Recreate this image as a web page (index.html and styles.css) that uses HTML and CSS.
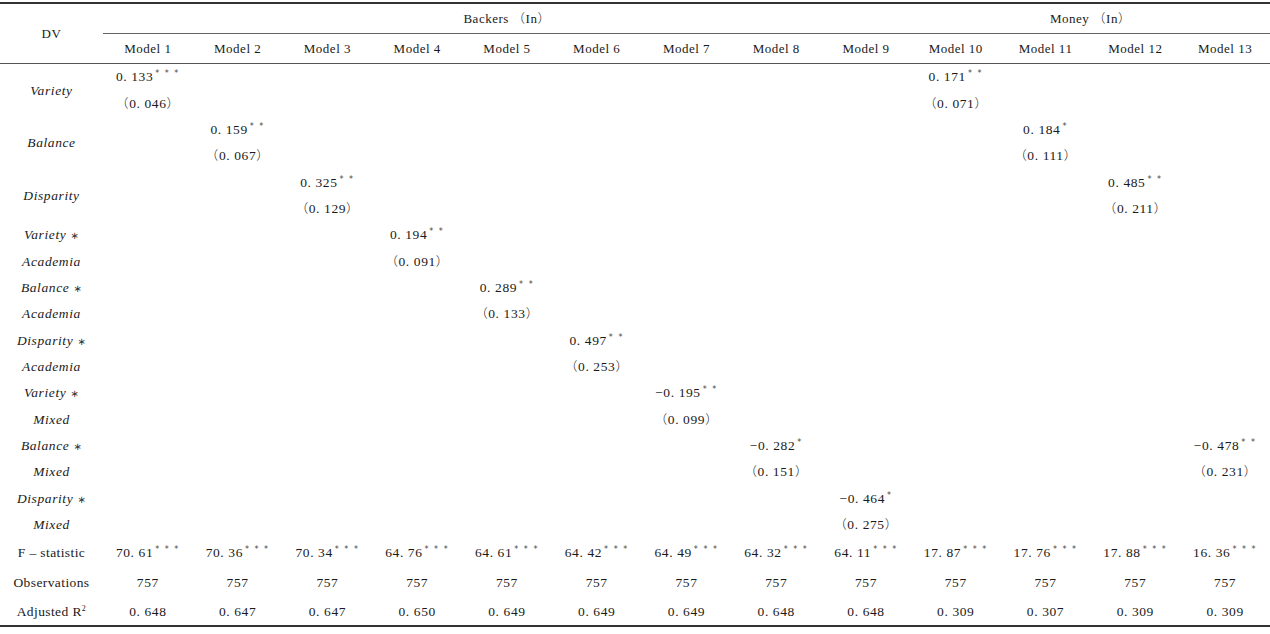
FILE: index.html
```html
<!DOCTYPE html>
<html>
<head>
<meta charset="utf-8">
<link rel="stylesheet" href="styles.css">
</head>
<body>
<table class="t">
<colgroup><col class="c0"><col span="13"></colgroup>
<tr class="h1"><td rowspan="2" class="dv">DV</td><td colspan="9" class="grp">Backers <span class="p">（</span>In<span class="p">）</span></td><td colspan="4" class="grp">Money <span class="p">（</span>In<span class="p">）</span></td></tr>
<tr class="h2"><td>Model 1</td><td>Model 2</td><td>Model 3</td><td>Model 4</td><td>Model 5</td><td>Model 6</td><td>Model 7</td><td>Model 8</td><td>Model 9</td><td>Model 10</td><td>Model 11</td><td>Model 12</td><td>Model 13</td></tr>

<tr class="d"><td rowspan="2" class="lab"><i>Variety</i></td><td class="n">0. 133<sup>* * *</sup></td><td></td><td></td><td></td><td></td><td></td><td></td><td></td><td></td><td class="n">0. 171<sup>* *</sup></td><td></td><td></td><td></td></tr>
<tr class="d"><td class="n"><span class="p">（</span>0. 046<span class="p">）</span></td><td></td><td></td><td></td><td></td><td></td><td></td><td></td><td></td><td class="n"><span class="p">（</span>0. 071<span class="p">）</span></td><td></td><td></td><td></td></tr>

<tr class="d"><td rowspan="2" class="lab"><i>Balance</i></td><td></td><td class="n">0. 159<sup>* *</sup></td><td></td><td></td><td></td><td></td><td></td><td></td><td></td><td></td><td class="n">0. 184<sup>*</sup></td><td></td><td></td></tr>
<tr class="d"><td></td><td class="n"><span class="p">（</span>0. 067<span class="p">）</span></td><td></td><td></td><td></td><td></td><td></td><td></td><td></td><td></td><td class="n"><span class="p">（</span>0. 111<span class="p">）</span></td><td></td><td></td></tr>

<tr class="d"><td rowspan="2" class="lab"><i>Disparity</i></td><td></td><td></td><td class="n">0. 325<sup>* *</sup></td><td></td><td></td><td></td><td></td><td></td><td></td><td></td><td></td><td class="n">0. 485<sup>* *</sup></td><td></td></tr>
<tr class="d"><td></td><td></td><td class="n"><span class="p">（</span>0. 129<span class="p">）</span></td><td></td><td></td><td></td><td></td><td></td><td></td><td></td><td></td><td class="n"><span class="p">（</span>0. 211<span class="p">）</span></td><td></td></tr>

<tr class="d"><td class="lab"><i>Variety</i> <span class="ast">∗</span></td><td></td><td></td><td></td><td class="n">0. 194<sup>* *</sup></td><td></td><td></td><td></td><td></td><td></td><td></td><td></td><td></td><td></td></tr>
<tr class="d"><td class="lab"><i>Academia</i></td><td></td><td></td><td></td><td class="n"><span class="p">（</span>0. 091<span class="p">）</span></td><td></td><td></td><td></td><td></td><td></td><td></td><td></td><td></td><td></td></tr>

<tr class="d"><td class="lab"><i>Balance</i> <span class="ast">∗</span></td><td></td><td></td><td></td><td></td><td class="n">0. 289<sup>* *</sup></td><td></td><td></td><td></td><td></td><td></td><td></td><td></td><td></td></tr>
<tr class="d"><td class="lab"><i>Academia</i></td><td></td><td></td><td></td><td></td><td class="n"><span class="p">（</span>0. 133<span class="p">）</span></td><td></td><td></td><td></td><td></td><td></td><td></td><td></td><td></td></tr>

<tr class="d"><td class="lab"><i>Disparity</i> <span class="ast">∗</span></td><td></td><td></td><td></td><td></td><td></td><td class="n">0. 497<sup>* *</sup></td><td></td><td></td><td></td><td></td><td></td><td></td><td></td></tr>
<tr class="d"><td class="lab"><i>Academia</i></td><td></td><td></td><td></td><td></td><td></td><td class="n"><span class="p">（</span>0. 253<span class="p">）</span></td><td></td><td></td><td></td><td></td><td></td><td></td><td></td></tr>

<tr class="d"><td class="lab"><i>Variety</i> <span class="ast">∗</span></td><td></td><td></td><td></td><td></td><td></td><td></td><td class="n">−0. 195<sup>* *</sup></td><td></td><td></td><td></td><td></td><td></td><td></td></tr>
<tr class="d"><td class="lab"><i>Mixed</i></td><td></td><td></td><td></td><td></td><td></td><td></td><td class="n"><span class="p">（</span>0. 099<span class="p">）</span></td><td></td><td></td><td></td><td></td><td></td><td></td></tr>

<tr class="d"><td class="lab"><i>Balance</i> <span class="ast">∗</span></td><td></td><td></td><td></td><td></td><td></td><td></td><td></td><td class="n">−0. 282<sup>*</sup></td><td></td><td></td><td></td><td></td><td class="n">−0. 478<sup>* *</sup></td></tr>
<tr class="d"><td class="lab"><i>Mixed</i></td><td></td><td></td><td></td><td></td><td></td><td></td><td></td><td class="n"><span class="p">（</span>0. 151<span class="p">）</span></td><td></td><td></td><td></td><td></td><td class="n"><span class="p">（</span>0. 231<span class="p">）</span></td></tr>

<tr class="d"><td class="lab"><i>Disparity</i> <span class="ast">∗</span></td><td></td><td></td><td></td><td></td><td></td><td></td><td></td><td></td><td class="n">−0. 464<sup>*</sup></td><td></td><td></td><td></td><td></td></tr>
<tr class="d"><td class="lab"><i>Mixed</i></td><td></td><td></td><td></td><td></td><td></td><td></td><td></td><td></td><td class="n"><span class="p">（</span>0. 275<span class="p">）</span></td><td></td><td></td><td></td><td></td></tr>

<tr class="s1"><td class="lab2">F – statistic</td><td class="n">70. 61<sup>* * *</sup></td><td class="n">70. 36<sup>* * *</sup></td><td class="n">70. 34<sup>* * *</sup></td><td class="n">64. 76<sup>* * *</sup></td><td class="n">64. 61<sup>* * *</sup></td><td class="n">64. 42<sup>* * *</sup></td><td class="n">64. 49<sup>* * *</sup></td><td class="n">64. 32<sup>* * *</sup></td><td class="n">64. 11<sup>* * *</sup></td><td class="n">17. 87<sup>* * *</sup></td><td class="n">17. 76<sup>* * *</sup></td><td class="n">17. 88<sup>* * *</sup></td><td class="n">16. 36<sup>* * *</sup></td></tr>
<tr class="s2"><td class="lab2">Observations</td><td class="n">757</td><td class="n">757</td><td class="n">757</td><td class="n">757</td><td class="n">757</td><td class="n">757</td><td class="n">757</td><td class="n">757</td><td class="n">757</td><td class="n">757</td><td class="n">757</td><td class="n">757</td><td class="n">757</td></tr>
<tr class="s3"><td class="lab2">Adjusted R<sup class="sq">2</sup></td><td class="n">0. 648</td><td class="n">0. 647</td><td class="n">0. 647</td><td class="n">0. 650</td><td class="n">0. 649</td><td class="n">0. 649</td><td class="n">0. 649</td><td class="n">0. 648</td><td class="n">0. 648</td><td class="n">0. 309</td><td class="n">0. 307</td><td class="n">0. 309</td><td class="n">0. 309</td></tr>
</table>
</body>
</html>
```
FILE: styles.css
```css
html, body {
  margin: 0;
  padding: 0;
  background: #fff;
}
body {
  color: #1a1a1a;
  font-family: "Liberation Serif", "Times New Roman", "DejaVu Serif", serif;
}
.t {
  width: 1270px;
  table-layout: fixed;
  border-collapse: collapse;
  margin-top: 2px;
  border-top: 2px solid #333;
  border-bottom: 2px solid #333;
  font-family: "Liberation Serif", "Times New Roman", "DejaVu Serif", serif;
  font-size: 13px;
  letter-spacing: 0.5px;
}
.c0 {
  width: 103px;
}
.t td {
  padding: 0;
  text-align: center;
  vertical-align: middle;
  white-space: nowrap;
  line-height: 1;
}
.p {
  font-family: "Noto Sans CJK SC", sans-serif;
  font-weight: 300;
  font-size: 12.5px;
}
.h1 td {
  height: 29px;
}
.h1 .grp {
  border-bottom: 1px solid #666;
}
.h2 td {
  height: 29px;
  border-bottom: 1px solid #555;
}
.dv {
  border-bottom: 1px solid #555;
}
.d td {
  height: 26.33px;
}
.s1 td {
  height: 30px;
}
.s2 td {
  height: 30px;
}
.s3 td {
  height: 27px;
}
.lab {
  font-size: 13.5px;
}
.lab i {
  letter-spacing: 0.6px;
}
.ast {
  font-family: "DejaVu Sans", sans-serif;
  font-size: 10px;
  color: #333;
}
.lab2 {
  font-size: 13.5px;
  letter-spacing: 0.4px;
}
.n {
  font-size: 13.5px;
  letter-spacing: 0.6px;
}
.n sup {
  font-family: "DejaVu Sans", sans-serif;
  font-size: 8px;
  letter-spacing: 1.5px;
  color: #444;
  vertical-align: 5px;
  margin-left: 2px;
}
.sq {
  font-size: 8px;
  vertical-align: 5px;
}
```
